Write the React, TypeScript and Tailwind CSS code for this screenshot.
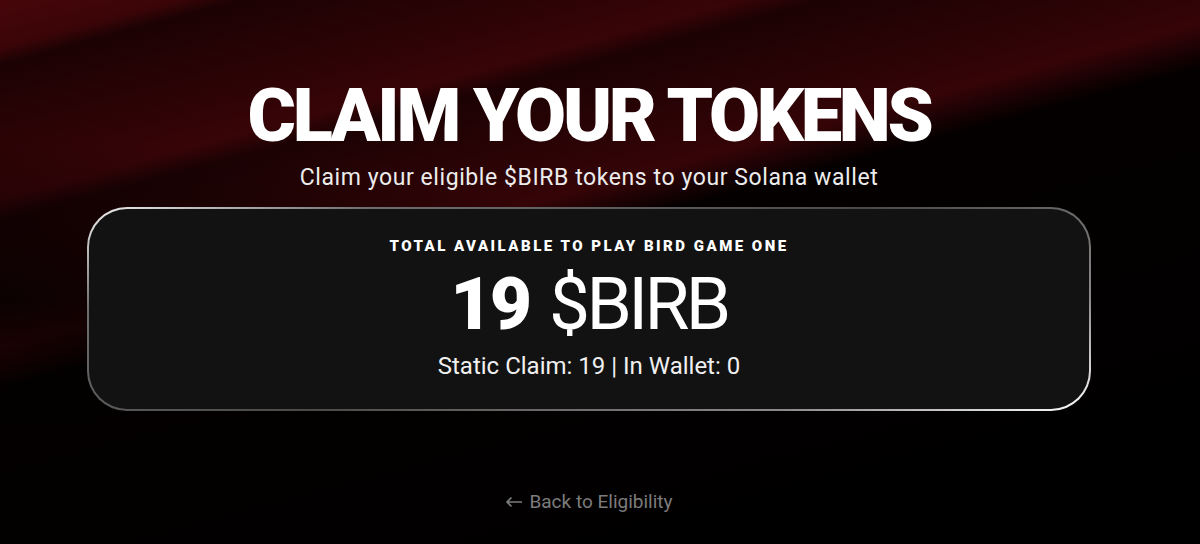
import React from 'react';

const App: React.FC = () => {
  return (
    <div className="relative h-[544px] w-full overflow-hidden bg-black font-['Roboto',sans-serif] text-white">
      {/* Diagonal red bands */}
      <div className="pointer-events-none absolute inset-0 bg-[linear-gradient(165deg,#46060a_0%,#3b0508_5.5%,#1c0203_7.5%,#370407_23%,#1c0203_25.5%,#350407_40%,#040000_45%,#000000_100%)]"></div>
      <div className="pointer-events-none absolute inset-0 bg-[radial-gradient(ellipse_at_0%_55%,rgba(0,0,0,0.75)_0%,rgba(0,0,0,0)_38%)]"></div>

      <div className="relative z-10 flex w-[1178px] flex-col items-center">
        <h1 className="mt-[79px] text-[74px] font-black leading-none tracking-[-0.045em]">
          CLAIM YOUR TOKENS
        </h1>
        <p className="mt-[13px] text-[23px] leading-none tracking-[0.025em] text-[#ececec]">
          Claim your eligible $BIRB tokens to your Solana wallet
        </p>

        {/* Balance card */}
        <div className="mt-[18px] h-[204px] w-[1004px] rounded-[40px] bg-[linear-gradient(160deg,#f2f2f2_0%,#6e6e6e_18%,#4a4a4a_50%,#8a8a8a_80%,#ffffff_100%)] p-[2px]">
          <div className="flex h-full w-full flex-col items-center rounded-[38px] bg-[#121212] pt-[30px]">
            <div className="text-[15px] font-black leading-none tracking-[0.165em]">
              TOTAL AVAILABLE TO PLAY BIRD GAME ONE
            </div>
            <div className="mt-[14px] flex items-baseline gap-[20px] text-[73px] leading-none">
              <span className="font-black tracking-[-0.04em]">19</span>
              <span className="font-normal tracking-[-0.05em]">$BIRB</span>
            </div>
            <div className="mt-[13px] text-[24px] leading-none text-[#f0f0f0]">
              Static Claim: 19 | In Wallet: 0
            </div>
          </div>
        </div>

        <button className="mt-[81px] flex items-center gap-[6px] text-[19px] leading-none text-[#7c7c7c]">
          <svg width="18" height="12" viewBox="0 0 18 12" fill="none" stroke="currentColor" strokeWidth="1.6">
            <path d="M17 6H2M6.5 1.5L2 6l4.5 4.5" />
          </svg>
          <span>Back to Eligibility</span>
        </button>
      </div>
    </div>
  );
};

export default App;
